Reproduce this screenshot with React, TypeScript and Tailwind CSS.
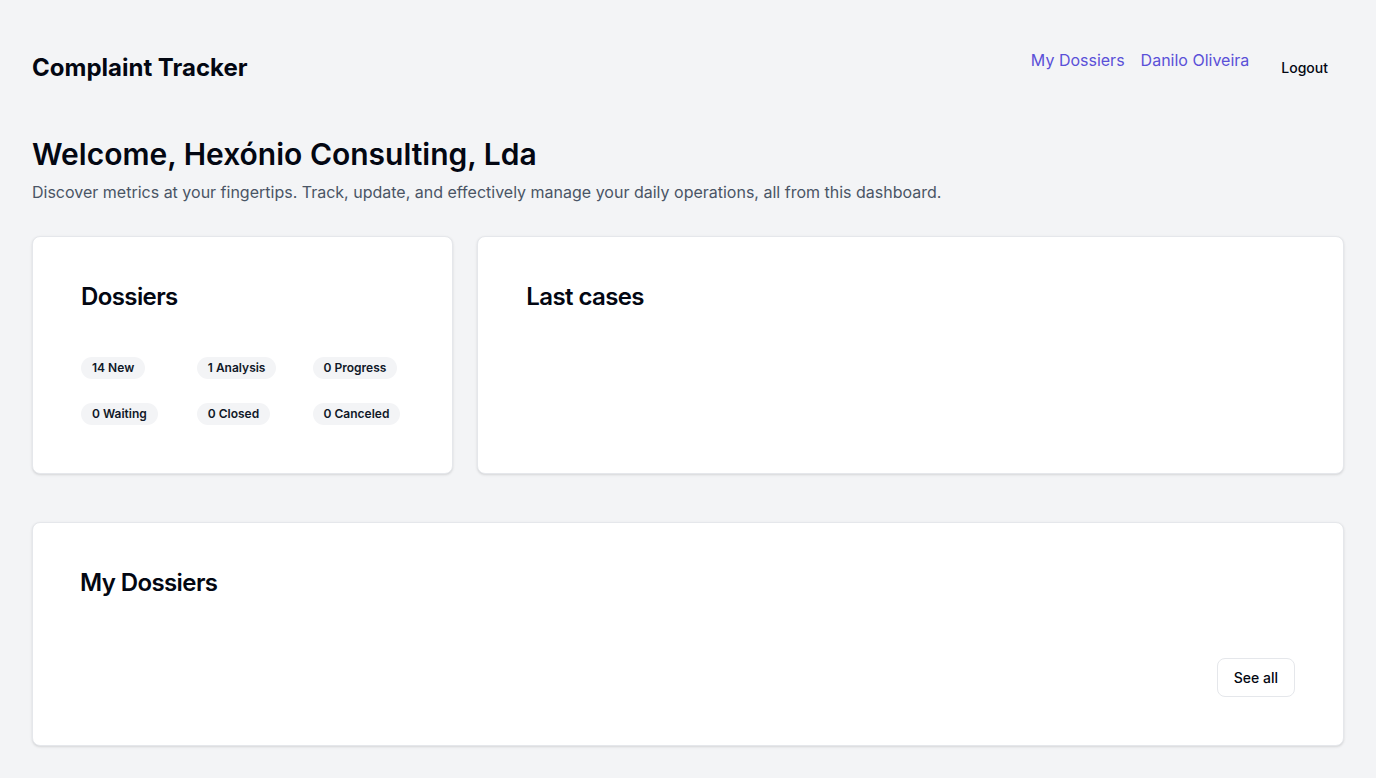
const stats = [
  { count: 14, label: 'New' },
  { count: 1, label: 'Analysis' },
  { count: 0, label: 'Progress' },
  { count: 0, label: 'Waiting' },
  { count: 0, label: 'Closed' },
  { count: 0, label: 'Canceled' },
];

function Card({ className, children }: { className?: string; children: React.ReactNode }) {
  return (
    <div className={`bg-white rounded-lg border border-gray-200 shadow-sm px-12 pt-11 pb-12 ${className ?? ''}`}>
      {children}
    </div>
  );
}

export default function App() {
  return (
    <div
      className="min-h-screen bg-gray-100 text-gray-950 px-8"
      style={{ fontFamily: 'Inter, "Noto Sans", sans-serif' }}
    >
      <header className="flex justify-between items-start pt-12">
        <h1 className="text-2xl leading-10 font-bold">Complaint Tracker</h1>
        <div className="flex items-start">
          <nav className="flex items-center gap-4 text-base leading-6 text-[#5a50d8]">
            <a href="#">My Dossiers</a>
            <a href="#">Danilo Oliveira</a>
          </nav>
          <button className="ml-4 px-4 py-2.5 text-sm leading-5 font-medium text-gray-950">Logout</button>
        </div>
      </header>

      <main className="pt-12 pb-8">
        <h2 className="text-3xl leading-9 font-semibold">Welcome, Hexónio Consulting, Lda</h2>
        <p className="mt-2 text-base leading-6 text-gray-600">
          Discover metrics at your fingertips. Track, update, and effectively manage your daily operations, all from this dashboard.
        </p>

        <div className="mt-8 grid grid-cols-3 gap-6">
          <Card>
            <h3 className="text-2xl leading-8 font-semibold tracking-tight">Dossiers</h3>
            <div className="mt-11 grid grid-cols-3 gap-6">
              {stats.map(s => (
                <div key={s.label} className="flex items-start">
                  <span className="rounded-full bg-gray-100 px-[11px] py-0.5 text-xs leading-[18px] font-semibold text-gray-900">
                    {s.count} {s.label}
                  </span>
                </div>
              ))}
            </div>
          </Card>
          <Card className="col-span-2">
            <h3 className="text-2xl leading-8 font-semibold tracking-tight">Last cases</h3>
          </Card>
        </div>

        <Card className="mt-12">
          <h3 className="text-2xl leading-8 font-semibold tracking-tight -ml-px">My Dossiers</h3>
          <div className="mt-[59px] flex justify-end">
            <button className="h-[39px] rounded-lg border border-gray-200 bg-white px-4 text-sm leading-5 font-medium text-gray-950">
              See all
            </button>
          </div>
        </Card>
      </main>
    </div>
  );
}
